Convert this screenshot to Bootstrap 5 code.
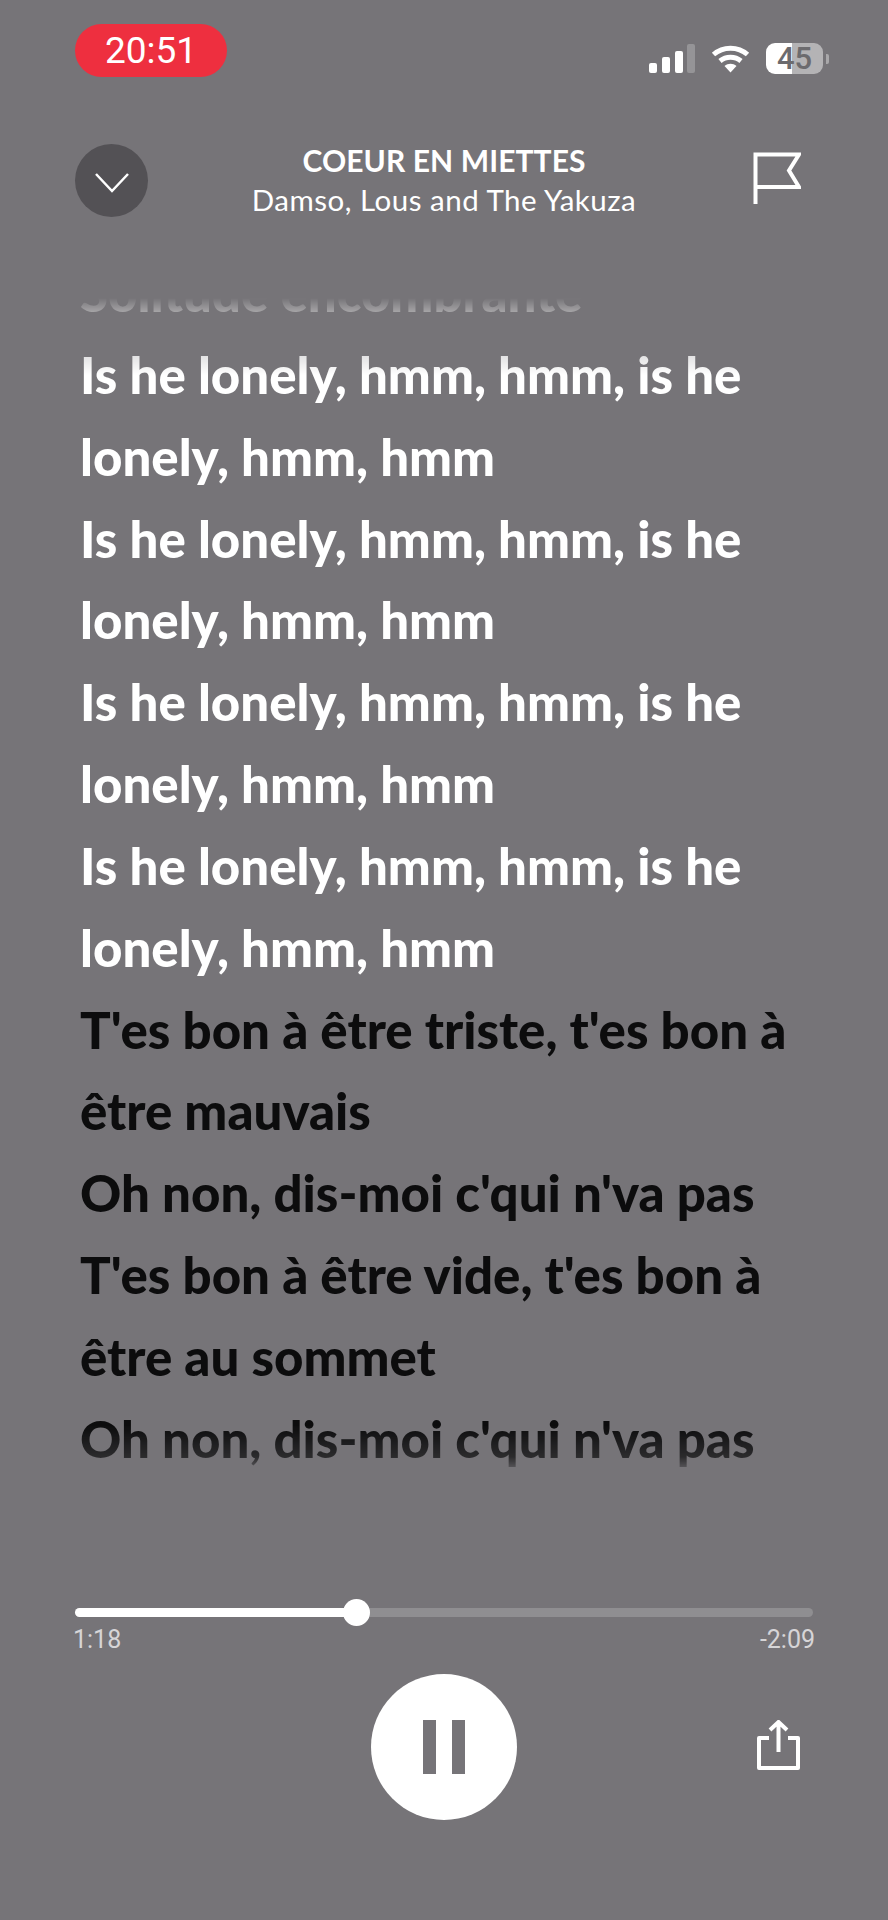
<!DOCTYPE html>
<html lang="en">
<head>
<meta charset="UTF-8">
<meta name="viewport" content="width=device-width, initial-scale=1.0">
<title>Coeur en miettes</title>
<link rel="stylesheet" href="https://cdn.jsdelivr.net/npm/bootstrap@5.3.0/dist/css/bootstrap.min.css">
<style>
  body { background: #767478; font-family: "Lato", "Liberation Sans", sans-serif; color: #fff; width: 888px; height: 1920px; overflow: hidden; }
  .status-row { height: 144px; padding: 24px 59px 0 75px; }
  .clock-pill { width: 152px; height: 53px; background: #ee2f3f; border-radius: 27px; font: 400 37px/53px "Roboto", sans-serif; text-align: center; }
  .status-icons { padding-top: 19px; }
  .batt { width: 57px; height: 31px; border-radius: 9px; background: linear-gradient(90deg, #fff 0, #fff 26px, #b4b3b5 26px); color: #6c6b6e; font: 500 31px/31px "Roboto", sans-serif; text-align: center; }
  .batt-nub { width: 3px; height: 10px; background: #a9a8aa; border-radius: 0 2px 2px 0; margin-left: 3px; }
  .head-row { height: 141px; padding: 0 75px; display: grid; grid-template-columns: 1fr auto 1fr; }
  .round-back { width: 73px; height: 73px; background: #535155; border-radius: 50%; }
  .song-title { font: 700 30px/34px "Lato", sans-serif; letter-spacing: .1px; margin-top: -1px; }
  .song-artist { font: 400 29.500px/38px "Lato", sans-serif; letter-spacing: .5px; margin-top: 4px; }
  .flag-box { justify-self: end; margin: 8px 12px 0 0; }
  .lyrics-box { height: 1185px; overflow: hidden; padding: 0 40px 0 80px;
    -webkit-mask-image: linear-gradient(to bottom, transparent 13px, rgba(0,0,0,.35) 27px, rgba(0,0,0,.75) 67px, #000 90px, #000 1140px, rgba(0,0,0,.7) 1172px, rgba(0,0,0,.2) 1185px);
    mask-image: linear-gradient(to bottom, transparent 13px, rgba(0,0,0,.35) 27px, rgba(0,0,0,.75) 67px, #000 90px, #000 1140px, rgba(0,0,0,.7) 1172px, rgba(0,0,0,.2) 1185px); }
  .lyrics-in { margin-top: -33px; }
  .lyric-line { font: 900 51px/81.85px "Lato", sans-serif; margin: 0; }
  .lyric-next { color: #0c0c0d; }
  .player-box { padding: 138px 75px 0; }
  .seek { height: 9px; background: #8f8e91; border-radius: 5px; }
  .seek-fill { width: 282px; background: #fff; border-radius: 5px; }
  .seek-knob { width: 27px; height: 27px; background: #fff; border-radius: 50%; top: -9px; left: 268px; }
  .time-row { margin: 9px -2px 0; font: 400 25px/28px "Roboto", sans-serif; color: #d6d5d7; }
  .ctl-row { display: grid; grid-template-columns: 1fr auto 1fr; margin-top: 20px; }
  .pause-btn { width: 146px; height: 146px; background: #fff; border-radius: 50%; }
  .pause-bar { width: 13px; height: 54px; background: #767478; }
  .share-wrap { margin: 46px 13px 0 0; }
</style>
</head>
<body>

  <div class="status-row d-flex justify-content-between align-items-start">
    <div class="clock-pill">20:51</div>
    <div class="status-icons d-flex align-items-center">
      <svg width="46" height="30" viewBox="0 0 46 30" class="me-3">
        <rect x="0" y="19" width="8" height="10" rx="2" fill="#fff"/>
        <rect x="13" y="13" width="8" height="16" rx="2" fill="#fff"/>
        <rect x="26" y="7" width="8" height="22" rx="2" fill="#fff"/>
        <rect x="38" y="0" width="8" height="29" rx="2" fill="#959497"/>
      </svg>
      <svg width="39" height="28" viewBox="0 0 39 28" class="me-3">
        <path d="M2.500 9.500C12 1 27 1 36.500 9.500" fill="none" stroke="#fff" stroke-width="5"/>
        <path d="M9 16C15 11 24 11 30 16" fill="none" stroke="#fff" stroke-width="5"/>
        <path d="M13.500 21C17 18 22 18 25.500 21L19.500 27.500Z" fill="#fff"/>
      </svg>
      <div class="batt">45</div>
      <div class="batt-nub"></div>
    </div>
  </div>

  <div class="head-row">
    <div class="round-back d-flex align-items-center justify-content-center">
      <svg class="mt-1" width="36" height="21" viewBox="0 0 36 21"><path d="M2 2L18 19L34 2" fill="none" stroke="#fff" stroke-width="2.500"/></svg>
    </div>
    <div class="text-center">
      <div class="song-title">COEUR EN MIETTES</div>
      <div class="song-artist">Damso, Lous and The Yakuza</div>
    </div>
    <svg class="flag-box" width="48" height="52" viewBox="0 0 48 52"><path d="M2.500 52V2.500H46L36 18.500L46 35H2.500" fill="none" stroke="#fff" stroke-width="4"/></svg>
  </div>

  <div class="lyrics-box">
    <div class="lyrics-in" id="lyrics"></div>
  </div>

  <div class="player-box">
    <div class="seek position-relative d-flex">
      <div class="seek-fill"></div>
      <div class="seek-knob position-absolute"></div>
    </div>
    <div class="time-row d-flex justify-content-between">
      <span>1:18</span>
      <span>-2:09</span>
    </div>
    <div class="ctl-row">
      <div></div>
      <div class="pause-btn d-flex align-items-center justify-content-center gap-3">
        <div class="pause-bar"></div>
        <div class="pause-bar"></div>
      </div>
      <div class="share-wrap text-end">
        <svg width="43" height="50" viewBox="0 0 43 50">
          <path d="M12 18H2V48H41V18H31" fill="none" stroke="#fff" stroke-width="4" stroke-linejoin="round"/>
          <path d="M21.500 32V3M13 10L21.500 2L30 10" fill="none" stroke="#fff" stroke-width="4"/>
        </svg>
      </div>
    </div>
  </div>

  <script>
    const lines = [
      ["Solitude encombrante", 0],
      ["Is he lonely, hmm, hmm, is he lonely, hmm, hmm", 0],
      ["Is he lonely, hmm, hmm, is he lonely, hmm, hmm", 0],
      ["Is he lonely, hmm, hmm, is he lonely, hmm, hmm", 0],
      ["Is he lonely, hmm, hmm, is he lonely, hmm, hmm", 0],
      ["T'es bon à être triste, t'es bon à être mauvais", 1],
      ["Oh non, dis-moi c'qui n'va pas", 1],
      ["T'es bon à être vide, t'es bon à être au sommet", 1],
      ["Oh non, dis-moi c'qui n'va pas", 1]
    ];
    let html = "";
    lines.map((val) => {
      html += `<p class="lyric-line ${val[1] ? "lyric-next" : ""}">${val[0]}</p>`;
    });
    document.getElementById("lyrics").innerHTML = html;
  </script>
  <script src="https://cdn.jsdelivr.net/npm/bootstrap@5.3.0/dist/js/bootstrap.bundle.min.js"></script>
</body>
</html>
